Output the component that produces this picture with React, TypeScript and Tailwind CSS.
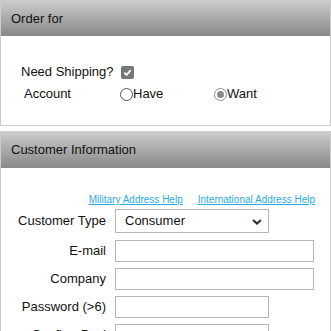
import React from 'react';

function Radio({ checked }: { checked?: boolean }) {
  return checked ? (
    <span className="inline-flex w-[13px] h-[13px] rounded-full border border-[#8a8a8a] bg-white items-center justify-center">
      <span className="w-[7px] h-[7px] rounded-full bg-[#8a8a8a]"></span>
    </span>
  ) : (
    <span className="inline-block w-[13px] h-[13px] rounded-full border border-[#555] bg-white"></span>
  );
}

function Row({ label, children }: { label: string; children: React.ReactNode }) {
  return (
    <div className="flex items-center">
      <div className="w-[105px] text-right">{label}</div>
      <div className="ml-[9px]">{children}</div>
    </div>
  );
}

export default function App() {
  return (
    <div className="w-[331px] h-[331px] overflow-hidden bg-white text-[13px] text-[#111] font-['Liberation_Sans',Arial,sans-serif]">
      {/* Order for */}
      <div className="border border-[#cccccc]">
        <div className="h-[35px] pl-[10px] flex items-center bg-gradient-to-b from-[#cccccc] to-[#888888]">
          Order for
        </div>
        <div className="h-[89px] pt-[28px]">
          <div className="flex items-center h-[16px] pl-[20px]">
            <span>Need Shipping?</span>
            <span className="ml-[7px] w-[13px] h-[13px] rounded-[2px] bg-[#777777] flex items-center justify-center">
              <svg width="9" height="9" viewBox="0 0 10 10">
                <path d="M1.5 5.2 L4 7.6 L8.6 2.4" fill="none" stroke="#fff" strokeWidth="2" />
              </svg>
            </span>
          </div>
          <div className="flex items-center h-[16px] mt-[6px] pl-[23px]">
            <span className="w-[96px]">Account</span>
            <span className="w-[94px] flex items-center">
              <Radio />
              <span>Have</span>
            </span>
            <span className="flex items-center">
              <Radio checked />
              <span>Want</span>
            </span>
          </div>
        </div>
      </div>

      {/* Customer Information */}
      <div className="mt-[5px] border border-[#cccccc]">
        <div className="h-[36px] pl-[10px] flex items-center bg-gradient-to-b from-[#cccccc] to-[#888888]">
          Customer Information
        </div>
        <div className="pt-[26px] pb-4">
          <div className="flex justify-end gap-[15px] pr-[15px] text-[10px] leading-[12px] text-[#29aae1] underline">
            <a href="#">Military Address Help</a>
            <a href="#">International Address Help</a>
          </div>
          <div className="mt-[3px] flex flex-col gap-[6px]">
            <Row label="Customer Type">
              <div className="relative w-[154px] h-[24px] border border-[#b5b5b5] flex items-center pl-[9px]">
                Consumer
                <svg className="absolute right-[6px] top-[9px]" width="10" height="6" viewBox="0 0 10 6">
                  <path d="M1 1 L5 4.6 L9 1" fill="none" stroke="#3a2a2a" strokeWidth="2" />
                </svg>
              </div>
            </Row>
            <Row label="E-mail">
              <div className="w-[199px] h-[22px] mt-[1px] border border-[#b5b5b5]"></div>
            </Row>
            <Row label="Company">
              <div className="w-[199px] h-[22px] border border-[#b5b5b5]"></div>
            </Row>
            <Row label="Password (>6)">
              <div className="w-[154px] h-[22px] border border-[#b5b5b5]"></div>
            </Row>
            <Row label="Confirm Pwd">
              <div className="w-[154px] h-[22px] border border-[#b5b5b5]"></div>
            </Row>
          </div>
        </div>
      </div>
    </div>
  );
}
